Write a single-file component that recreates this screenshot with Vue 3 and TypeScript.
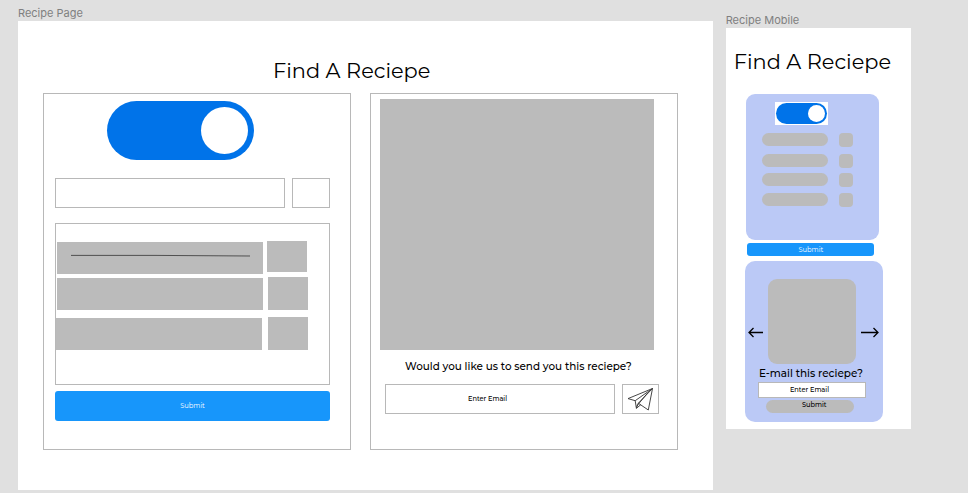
<script setup lang="ts">
const ingredients: string[] = ['first', 'second', 'third']
const mobileRows: number[] = [1, 2, 3, 4]
</script>

<template>
  <main class="canvas">
    <section class="frame">
      <div class="frame-label">Recipe Page</div>
      <div class="page">
        <h1 class="title">Find A Reciepe</h1>
        <div class="panels">
          <div class="panel panel-search">
            <div class="toggle"><span class="knob"></span></div>
            <div class="field-row">
              <div class="box field"></div>
              <div class="box add"></div>
            </div>
            <div class="list">
              <div v-for="name in ingredients" :key="name" class="item" :class="name">
                <div class="bar">
                  <svg v-if="name === 'first'" class="strike" viewBox="0 0 179 3">
                    <path d="M0 1.4H85L179 2" />
                  </svg>
                </div>
                <div class="square"></div>
              </div>
            </div>
            <div class="submit">Submit</div>
          </div>
          <div class="panel panel-result">
            <div class="photo"></div>
            <p class="question">Would you like us to send you this reciepe?</p>
            <div class="email-row">
              <div class="box email">Enter Email</div>
              <div class="box send">
                <svg class="plane" viewBox="0 0 27 24">
                  <path d="M1 11.6L25.5 1.5L21.3 23L11.3 16.2M1 11.6L8.2 13.7L25.5 1.5L11.3 16.2L9.4 21.3L8.2 13.7M9.4 21.3L13.8 17.7M9.4 19.5L21 5.5" />
                </svg>
              </div>
            </div>
          </div>
        </div>
      </div>
    </section>

    <section class="frame frame-mobile">
      <div class="frame-label">Recipe Mobile</div>
      <div class="phone">
        <h1 class="title">Find A Reciepe</h1>
        <div class="card card-search">
          <div class="toggle-wrap">
            <div class="toggle small"><span class="knob"></span></div>
          </div>
          <div class="pills">
            <div v-for="n in mobileRows" :key="n" class="pill-row">
              <div class="pill"></div>
              <div class="dot"></div>
            </div>
          </div>
        </div>
        <div class="submit submit-mobile">Submit</div>
        <div class="card card-result">
          <div class="carousel">
            <svg class="arrow-left" viewBox="0 0 15 11"><path d="M15 5.5H1M5.5 1L1 5.5L5.5 10" /></svg>
            <div class="thumb"></div>
            <svg class="arrow-right" viewBox="0 0 18 11"><path d="M0 5.5H17M12.5 1L17 5.5L12.5 10" /></svg>
          </div>
          <p class="question">E-mail this reciepe?</p>
          <div class="box email">Enter Email</div>
          <div class="send-pill">Submit</div>
        </div>
      </div>
    </section>
  </main>
</template>

<style>
body {
  background: #e0e0e0;
}
</style>

<style scoped>
* {
  box-sizing: border-box;
}
.canvas {
  display: flex;
  gap: 12.7px;
  width: 968px;
  height: 493px;
  padding-left: 18px;
  overflow: hidden;
  background: #e0e0e0;
  color: #000;
  font-family: Montserrat, Inter, sans-serif;
  white-space: nowrap;
}
.frame-mobile {
  padding-top: 7px;
}
.frame-label {
  height: 21px;
  padding-top: 6px;
  color: #7f7f7f;
  font: 11px/14px Inter, sans-serif;
}
.page {
  width: 695px;
  height: 469px;
  background: #fff;
}
.title {
  height: 72px;
  margin: 0;
  padding: 36px 0 0 255px;
  font-size: 20.9px;
  font-weight: 400;
  line-height: 28px;
}
.panels {
  display: flex;
  gap: 19px;
  padding-left: 25px;
}
.panel {
  width: 308px;
  height: 357px;
  border: 1px solid #b8b8b8;
}
.panel-search {
  padding: 7px 0 0 11px;
}
.toggle {
  display: flex;
  align-items: center;
  justify-content: flex-end;
  width: 146.5px;
  height: 59px;
  margin-left: 52.3px;
  padding-right: 5.5px;
  border-radius: 30px;
  background: #0073e9;
}
.knob {
  width: 47px;
  height: 47px;
  border-radius: 50%;
  background: #fff;
}
.field-row,
.email-row {
  display: flex;
  gap: 7px;
}
.field-row {
  margin-top: 18px;
}
.box {
  display: flex;
  align-items: center;
  justify-content: center;
  height: 30px;
  border: 1px solid #b8b8b8;
  background: #fff;
}
.field {
  width: 230px;
}
.add {
  width: 38px;
}
.list {
  width: 275px;
  height: 162px;
  margin-top: 15px;
  padding-top: 17px;
  border: 1px solid #b8b8b8;
}
.item {
  display: flex;
  align-items: flex-start;
}
.bar {
  width: 206px;
  height: 32px;
  background: #bbb;
}
.square {
  width: 40px;
  height: 33px;
  background: #bbb;
}
.first {
  gap: 4px;
  padding-left: 1px;
}
.first .bar {
  margin-top: 1px;
}
.first .square {
  height: 31px;
}
.second {
  gap: 5px;
  margin-top: 3px;
  padding-left: 1px;
}
.second .bar {
  margin-top: 1px;
}
.third {
  gap: 6px;
  margin-top: 7px;
}
.third .bar {
  margin-top: 1px;
}
.strike {
  display: block;
  width: 179px;
  height: 3px;
  margin: 12px 0 0 14px;
  fill: none;
  stroke: #444;
  stroke-width: 0.9;
}
.submit {
  display: flex;
  align-items: center;
  justify-content: center;
  width: 275px;
  height: 30px;
  margin-top: 6px;
  border-radius: 3px;
  background: #1796fb;
  color: #fff;
  font-size: 6.7px;
  line-height: 10px;
}
.panel-result {
  padding: 5px 0 0 9px;
}
.photo {
  width: 274px;
  height: 251px;
  background: #bbb;
}
.question {
  margin: 0;
  font-weight: 500;
}
.panel-result .question {
  height: 34px;
  padding: 9px 0 0 25px;
  font-size: 10.4px;
  line-height: 16px;
}
.email-row {
  padding-left: 5px;
}
.email {
  width: 230px;
  font-size: 6.6px;
  font-weight: 500;
  line-height: 10px;
}
.email-row .email {
  padding-right: 25px;
}
.send {
  width: 37px;
}
.plane {
  width: 27px;
  height: 24px;
  margin-right: 1px;
  fill: none;
  stroke: #333;
  stroke-width: 0.9;
  stroke-linejoin: round;
}
.phone {
  width: 185px;
  height: 401px;
  background: #fff;
}
.phone .title {
  height: 66px;
  padding: 20px 0 0 8px;
}
.card {
  background: #bbc9f6;
}
.card-search {
  width: 133.5px;
  height: 146px;
  margin-left: 19.9px;
  padding-top: 8px;
  border-radius: 9px;
}
.toggle-wrap {
  width: 53px;
  height: 23px;
  margin-left: 29.6px;
  padding: 1px 0 0 0.7px;
  background: #fff;
}
.small {
  width: 51.5px;
  height: 21px;
  margin: 0;
  padding-right: 2px;
}
.small .knob {
  width: 17px;
  height: 17px;
}
.pills {
  display: flex;
  flex-direction: column;
  gap: 5.4px;
  padding: 8px 0 0 16.7px;
}
.pill-row {
  display: flex;
  gap: 11px;
}
.pill-row:first-child {
  margin-bottom: 1.5px;
}
.pill {
  width: 66px;
  height: 13px;
  border-radius: 7px;
  background: #bbb;
}
.dot {
  width: 14px;
  height: 14px;
  border-radius: 4px;
  background: #bbb;
}
.submit-mobile {
  width: 127px;
  height: 13px;
  margin: 3px 0 0 21.6px;
}
.card-result {
  width: 138px;
  height: 161px;
  margin: 5px 0 0 19.3px;
  padding-top: 18px;
  border-radius: 10px;
}
.carousel {
  display: flex;
  padding-left: 2.8px;
}
.carousel svg {
  height: 11px;
  margin-top: 48px;
  fill: none;
  stroke: #000;
  stroke-width: 1.3;
}
.arrow-left {
  width: 15px;
}
.arrow-right {
  width: 18px;
}
.thumb {
  width: 88px;
  height: 85px;
  margin: 0 5px 0 5.6px;
  border-radius: 9px;
  background: #bbb;
}
.card-result .question {
  height: 18px;
  padding: 2px 0 0 14px;
  font-size: 10.45px;
  line-height: 16px;
}
.card-result .email {
  width: 108px;
  height: 16px;
  margin-left: 13px;
  padding-right: 5px;
}
.send-pill {
  width: 88px;
  height: 13px;
  margin: 2px 0 0 20.8px;
  padding-left: 9px;
  border-radius: 7px;
  background: #bbb;
  font-size: 6.6px;
  font-weight: 500;
  line-height: 11px;
  text-align: center;
}
</style>
